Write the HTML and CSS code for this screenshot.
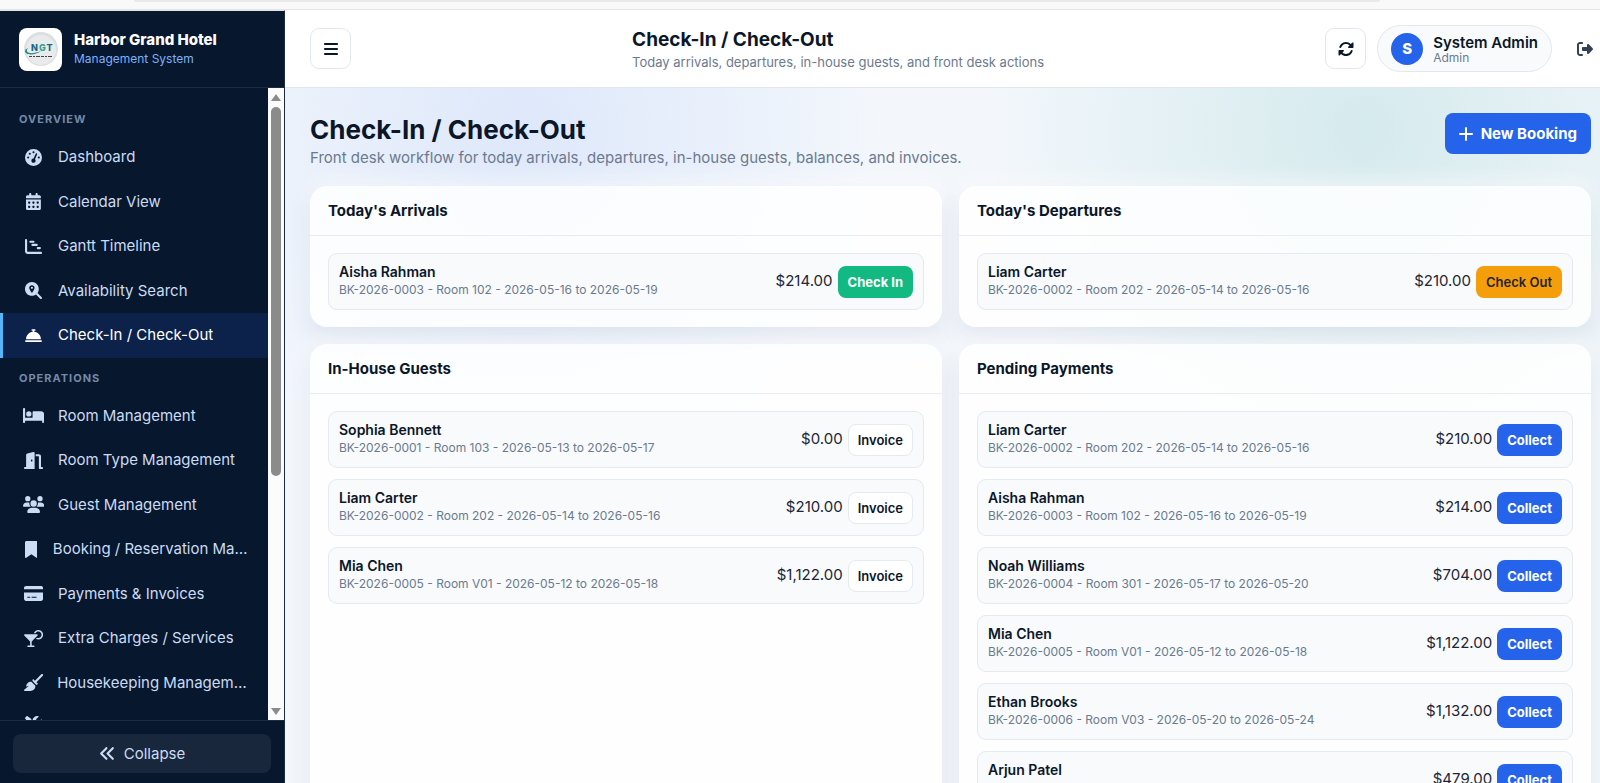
FILE: index.html
```html
<!DOCTYPE html>
<html lang="en">
<head>
    <meta charset="UTF-8">
    <meta name="viewport" content="width=device-width, initial-scale=1.0">
    <title>Check-In / Check-Out - Harbor Grand Hotel</title>
    <link rel="stylesheet" href="styles.css">
</head>
<body>
    <div class="window-strip"><div class="address-bar"></div></div>

    <div class="app">
        <aside class="sidebar">
            <div class="brand">
                <svg class="brand-logo" viewBox="0 0 43 43" aria-hidden="true">
                    <rect width="43" height="43" rx="8" fill="#fff"/>
                    <circle cx="22" cy="21" r="17" fill="#dcdfe1"/>
                    <circle cx="22" cy="22" r="15" fill="#e9eaec"/>
                    <path d="M9 20c-4 5 3 7 13 3-5 4-16 5-16 0 0-1 1-2 3-3z" fill="#1f8a86"/>
                    <text x="12" y="23" class="logo-text"><tspan fill="#17677f">N</tspan><tspan dx="1" fill="#35a08c">G</tspan><tspan dx="1" fill="#17677f">T</tspan></text>
                    <path d="M10 28.500h24" stroke="#454545" stroke-dasharray="3 1 2 1 4 1"/>
                </svg>
                <div class="brand-text">
                    <strong>Harbor Grand Hotel</strong>
                    <span>Management System</span>
                </div>
            </div>

            <div class="nav-area">
                <nav class="nav">
                    <div class="nav-title">Overview</div>
                    <a href="#" class="nav-link">
                        <span class="nav-icon"><svg viewBox="0 0 512 512"><path d="M0 256a256 256 0 1 1 512 0A256 256 0 1 1 0 256zM288 96a32 32 0 1 0 -64 0 32 32 0 1 0 64 0zM256 416c35.3 0 64-28.7 64-64c0-17.4-6.9-33.1-18.1-44.6L366 161.7c5.3-12.1-.2-26.3-12.3-31.6s-26.3 .2-31.6 12.3L257.9 288c-.6 0-1.3 0-1.9 0c-35.3 0-64 28.7-64 64s28.7 64 64 64zM176 144a32 32 0 1 0 -64 0 32 32 0 1 0 64 0zM96 288a32 32 0 1 0 0-64 32 32 0 1 0 0 64zm352-32a32 32 0 1 0 -64 0 32 32 0 1 0 64 0z"/></svg></span>
                        <span class="nav-text">Dashboard</span>
                    </a>
                    <a href="#" class="nav-link">
                        <span class="nav-icon"><svg viewBox="0 0 448 512"><path d="M128 0c17.7 0 32 14.3 32 32V64H288V32c0-17.7 14.3-32 32-32s32 14.3 32 32V64h48c26.5 0 48 21.5 48 48v48H0V112C0 85.5 21.5 64 48 64H96V32c0-17.7 14.3-32 32-32zM0 192H448V464c0 26.5-21.5 48-48 48H48c-26.5 0-48-21.5-48-48V192zm64 80v32c0 8.8 7.2 16 16 16h32c8.8 0 16-7.2 16-16V272c0-8.8-7.2-16-16-16H80c-8.8 0-16 7.2-16 16zm128 0v32c0 8.8 7.2 16 16 16h32c8.8 0 16-7.2 16-16V272c0-8.8-7.2-16-16-16H208c-8.8 0-16 7.2-16 16zm144-16c-8.8 0-16 7.2-16 16v32c0 8.8 7.2 16 16 16h32c8.8 0 16-7.2 16-16V272c0-8.8-7.2-16-16-16H336zM64 400v32c0 8.8 7.2 16 16 16h32c8.8 0 16-7.2 16-16V400c0-8.8-7.2-16-16-16H80c-8.8 0-16 7.2-16 16zm144-16c-8.8 0-16 7.2-16 16v32c0 8.8 7.2 16 16 16h32c8.8 0 16-7.2 16-16V400c0-8.8-7.2-16-16-16H208zm112 16v32c0 8.8 7.2 16 16 16h32c8.8 0 16-7.2 16-16V400c0-8.8-7.2-16-16-16H336c-8.8 0-16 7.2-16 16z"/></svg></span>
                        <span class="nav-text">Calendar View</span>
                    </a>
                    <a href="#" class="nav-link">
                        <span class="nav-icon"><svg viewBox="0 0 512 512"><path d="M32 32c17.7 0 32 14.3 32 32V400c0 8.800 7.200 16 16 16H480c17.700 0 32 14.300 32 32s-14.300 32-32 32H80c-44.200 0-80-35.800-80-80V64C0 46.300 14.300 32 32 32zM160 80h96a32 32 0 0 1 0 64h-96a32 32 0 0 1 0-64zM224 176h128a32 32 0 0 1 0 64H224a32 32 0 0 1 0-64zM384 272h64a32 32 0 0 1 0 64h-64a32 32 0 0 1 0-64z"/></svg></span>
                        <span class="nav-text">Gantt Timeline</span>
                    </a>
                    <a href="#" class="nav-link">
                        <span class="nav-icon"><svg viewBox="0 0 512 512"><path fill-rule="evenodd" d="M416 208c0 45.9-14.9 88.3-40 122.7L502.6 457.4c12.5 12.5 12.5 32.8 0 45.3s-32.8 12.5-45.3 0L330.7 376c-34.4 25.2-76.8 40-122.7 40C93.1 416 0 322.9 0 208S93.1 0 208 0S416 93.1 416 208zM288 176c0-44.2-35.8-80-80-80s-80 35.8-80 80c0 48.8 46.5 111.6 68.6 138.6c6 7.3 16.8 7.3 22.7 0c22.1-27 68.6-89.8 68.6-138.6zm-112 0a32 32 0 1 1 64 0 32 32 0 1 1 -64 0z"/></svg></span>
                        <span class="nav-text">Availability Search</span>
                    </a>
                    <a href="#" class="nav-link active">
                        <span class="nav-icon"><svg viewBox="0 0 512 512"><path d="M216 64c-13.3 0-24 10.7-24 24s10.7 24 24 24h16v33.3C119.6 157.2 32 252.4 32 368H480c0-115.6-87.6-210.8-200-222.7V112h16c13.3 0 24-10.7 24-24s-10.7-24-24-24H256 216zM24 400c-13.3 0-24 10.7-24 24s10.7 24 24 24H488c13.3 0 24-10.7 24-24s-10.7-24-24-24H24z"/></svg></span>
                        <span class="nav-text">Check-In / Check-Out</span>
                    </a>

                    <div class="nav-title">Operations</div>
                    <a href="#" class="nav-link">
                        <span class="nav-icon"><svg viewBox="0 0 640 512"><path d="M32 32c17.7 0 32 14.3 32 32V320H288V160c0-17.7 14.3-32 32-32H544c53 0 96 43 96 96V448c0 17.7-14.3 32-32 32s-32-14.3-32-32V416H352 320 64v32c0 17.7-14.3 32-32 32s-32-14.3-32-32V64C0 46.3 14.3 32 32 32zm144 96a80 80 0 1 1 0 160 80 80 0 1 1 0-160z"/></svg></span>
                        <span class="nav-text">Room Management</span>
                    </a>
                    <a href="#" class="nav-link">
                        <span class="nav-icon"><svg viewBox="0 0 576 512"><path d="M320 32c0-9.9-4.5-19.2-12.3-25.2S289.8-1.4 280.2 1l-179.9 45C79 51.3 64 70.5 64 92.5V448H32c-17.7 0-32 14.3-32 32s14.3 32 32 32H96 288h32V480 32zM256 256c0 17.7-10.7 32-24 32s-24-14.3-24-32s10.7-32 24-32s24 14.3 24 32zm96-128h96V480c0 17.7 14.3 32 32 32h64c17.7 0 32-14.3 32-32s-14.3-32-32-32H512V128c0-35.3-28.7-64-64-64H352v64z"/></svg></span>
                        <span class="nav-text">Room Type Management</span>
                    </a>
                    <a href="#" class="nav-link">
                        <span class="nav-icon"><svg viewBox="0 0 640 512"><path d="M144 0a80 80 0 1 1 0 160A80 80 0 1 1 144 0zM512 0a80 80 0 1 1 0 160A80 80 0 1 1 512 0zM0 298.7C0 239.8 47.8 192 106.7 192h42.7c15.9 0 31 3.5 44.6 9.7c-1.3 7.2-1.9 14.7-1.9 22.3c0 38.2 16.8 72.5 43.3 96c-.2 0-.4 0-.7 0H21.3C9.6 320 0 310.4 0 298.7zM405.3 320c-.2 0-.4 0-.7 0c26.6-23.5 43.3-57.8 43.3-96c0-7.6-.7-15-1.9-22.3c13.6-6.3 28.7-9.7 44.6-9.7h42.7C592.2 192 640 239.8 640 298.7c0 11.8-9.6 21.3-21.3 21.3H405.3zM224 224a96 96 0 1 1 192 0 96 96 0 1 1 -192 0zM128 485.3C128 411.7 187.7 352 261.3 352H378.7C452.3 352 512 411.7 512 485.3c0 14.7-11.9 26.7-26.7 26.7H154.7c-14.7 0-26.7-11.9-26.7-26.7z"/></svg></span>
                        <span class="nav-text">Guest Management</span>
                    </a>
                    <a href="#" class="nav-link">
                        <span class="nav-icon"><svg viewBox="0 0 384 512"><path d="M0 48V487.7C0 501.1 10.9 512 24.3 512c5 0 9.9-1.5 14-4.4L192 400 345.7 507.6c4.1 2.9 9 4.4 14 4.4c13.4 0 24.3-10.9 24.3-24.3V48c0-26.5-21.5-48-48-48H48C21.5 0 0 21.5 0 48z"/></svg></span>
                        <span class="nav-text">Booking / Reservation Management</span>
                    </a>
                    <a href="#" class="nav-link">
                        <span class="nav-icon"><svg viewBox="0 0 576 512"><path d="M64 32C28.7 32 0 60.7 0 96v32H576V96c0-35.3-28.7-64-64-64H64zM576 224H0V416c0 35.3 28.7 64 64 64H512c35.3 0 64-28.7 64-64V224zM112 352h64c8.8 0 16 7.2 16 16s-7.2 16-16 16H112c-8.8 0-16-7.2-16-16s7.2-16 16-16zm112 16c0-8.8 7.2-16 16-16H368c8.8 0 16 7.2 16 16s-7.2 16-16 16H240c-8.8 0-16-7.2-16-16z"/></svg></span>
                        <span class="nav-text">Payments &amp; Invoices</span>
                    </a>
                    <a href="#" class="nav-link">
                        <span class="nav-icon"><svg viewBox="0 0 576 512"><path d="M432 240c53 0 96-43 96-96s-43-96-96-96c-35.5 0-66.6 19.3-83.2 48H296.2C316 40.1 369.3 0 432 0c79.5 0 144 64.5 144 144s-64.5 144-144 144c-27.7 0-53.5-7.8-75.5-21.4l35.4-35.4c12.2 5.6 25.8 8.8 40.1 8.8zM1.8 142.8C5.5 133.8 14.3 128 24 128H392c9.7 0 18.5 5.8 22.2 14.8s1.7 19.3-5.2 26.2l-177 177V464h64c13.3 0 24 10.7 24 24s-10.7 24-24 24H208 120c-13.3 0-24-10.7-24-24s10.7-24 24-24h64V345.9L7 169c-6.9-6.9-8.9-17.2-5.2-26.2z"/></svg></span>
                        <span class="nav-text">Extra Charges / Services</span>
                    </a>
                    <a href="#" class="nav-link">
                        <span class="nav-icon"><svg viewBox="0 0 576 512"><path d="M566.6 54.6c12.5-12.5 12.5-32.8 0-45.3s-32.8-12.5-45.3 0l-192 192-34.7-34.7c-4.2-4.2-10-6.6-16-6.6c-12.5 0-22.6 10.1-22.6 22.6v29.1L364.3 320h29.1c12.5 0 22.6-10.1 22.6-22.6c0-6-2.4-11.8-6.6-16l-34.7-34.7 192-192zM341.1 353.4L222.6 234.9c-42.7-3.7-85.2 11.7-115.8 42.3l-8 8C76.5 307.5 64 337.7 64 369.2c0 6.8 7.1 11.2 13.2 8.2l51.1-25.5c5-2.5 9.5 4.1 5.4 7.9L7.3 473.4C2.7 477.6 0 483.6 0 489.9C0 502.1 9.9 512 22.1 512l173.3 0c38.8 0 75.9-15.4 103.4-42.8c30.6-30.6 45.9-73.1 42.3-115.8z"/></svg></span>
                        <span class="nav-text">Housekeeping Management</span>
                    </a>
                    <a href="#" class="nav-link" aria-label="Maintenance">
                        <span class="nav-icon"><svg viewBox="0 0 512 512"><path d="M78.6 5C69.1-2.4 55.6-1.5 47 7L7 47c-8.5 8.5-9.4 22-2.1 31.6l80 104c4.500 5.900 11.600 9.400 19 9.400h54.100l109 109c-14.700 29-10 65.400 14.300 89.600l112 112c12.500 12.500 32.800 12.500 45.300 0l64-64c12.500-12.500 12.500-32.800 0-45.300l-112-112c-24.200-24.200-60.600-29-89.600-14.300l-109-109V104c0-7.500-3.500-14.500-9.400-19L78.600 5zM512 144c0-10.500-1.100-20.700-3.200-30.500c-2.400-11.200-16.100-14.100-24.200-6l-63.900 63.900c-3 3-7.100 4.700-11.300 4.700H352c-8.800 0-16-7.200-16-16V102.600c0-4.200 1.700-8.300 4.700-11.300l63.900-63.900c8.100-8.100 5.200-21.800-6-24.200C388.700 1.100 378.500 0 368 0C288.500 0 224 64.500 224 144l0 .8 85.300 85.300c36-9.100 75.800 .5 104 28.700L429 274.500c49-23 83-72.800 83-130.500z"/></svg></span>
                    </a>
                </nav>
                <div class="scrollbar" aria-hidden="true">
                    <svg viewBox="0 0 12 9"><path d="M6 1l5 7H1z"/></svg>
                    <div class="scroll-track"><div class="scroll-thumb"></div></div>
                    <svg viewBox="0 0 12 9"><path d="M6 8l5-7H1z"/></svg>
                </div>
            </div>

            <div class="sidebar-footer">
                <button type="button" class="collapse-btn">
                    <svg viewBox="0 0 512 512"><path d="M41.4 233.4c-12.5 12.5-12.5 32.8 0 45.3l160 160c12.5 12.5 32.8 12.5 45.3 0s12.5-32.8 0-45.3L109.3 256 246.6 118.6c12.5-12.5 12.5-32.8 0-45.3s-32.8-12.5-45.3 0l-160 160zm352-160l-160 160c-12.5 12.5-12.5 32.8 0 45.3l160 160c12.5 12.5 32.8 12.5 45.3 0s12.5-32.8 0-45.3L301.3 256 438.6 118.6c12.5-12.5 12.5-32.8 0-45.3s-32.8-12.5-45.3 0z"/></svg>
                    Collapse
                </button>
            </div>
        </aside>

        <div class="main">
            <header class="topbar">
                <button type="button" class="icon-btn" aria-label="Toggle menu">
                    <svg viewBox="0 0 448 512"><path d="M0 96C0 78.3 14.3 64 32 64H416c17.7 0 32 14.3 32 32s-14.3 32-32 32H32C14.3 128 0 113.700 0 96zM0 256c0-17.700 14.300-32 32-32H416c17.700 0 32 14.300 32 32s-14.300 32-32 32H32c-17.700 0-32-14.300-32-32zM448 416c0 17.700-14.300 32-32 32H32c-17.700 0-32-14.300-32-32s14.300-32 32-32H416c17.700 0 32 14.300 32 32z"/></svg>
                </button>
                <div class="topbar-title">
                    <h2>Check-In / Check-Out</h2>
                    <p>Today arrivals, departures, in-house guests, and front desk actions</p>
                </div>
                <div class="topbar-actions">
                    <button type="button" class="icon-btn" aria-label="Refresh">
                        <svg viewBox="0 0 512 512"><path d="M142.9 142.9c62.2-62.2 162.7-62.5 225.3-1L327 183c-6.9 6.9-8.9 17.2-5.2 26.2s12.5 14.8 22.2 14.8H463.5c0 0 0 0 0 0H472c13.3 0 24-10.7 24-24V72c0-9.7-5.8-18.5-14.8-22.2s-19.3-1.7-26.2 5.2L413.4 96.6c-87.6-86.5-228.7-86.2-315.8 1C73.2 122 55.6 150.7 44.8 181.4c-5.9 16.7 2.9 34.9 19.5 40.8s34.9-2.9 40.8-19.5c7.7-21.8 20.2-42.3 37.8-59.8zM16 312v7.6 .7V440c0 9.7 5.8 18.5 14.8 22.2s19.3 1.7 26.2-5.2l41.6-41.6c87.6 86.5 228.7 86.2 315.8-1c24.4-24.4 42.1-53.1 52.9-83.7c5.9-16.7-2.9-34.9-19.5-40.8s-34.9 2.9-40.8 19.5c-7.7 21.8-20.2 42.3-37.8 59.8c-62.2 62.2-162.7 62.5-225.3 1L185 329c6.9-6.9 8.9-17.2 5.2-26.2s-12.5-14.8-22.2-14.8H48.4h-.7H40c-13.3 0-24 10.7-24 24z"/></svg>
                    </button>
                    <div class="user-pill">
                        <div class="avatar">S</div>
                        <div class="user-text">
                            <strong>System Admin</strong>
                            <span>Admin</span>
                        </div>
                    </div>
                    <button type="button" class="logout-btn" aria-label="Logout">
                        <svg viewBox="0 0 512 512"><path d="M377.9 105.9L500.7 228.7c7.2 7.2 11.3 17.1 11.3 27.3s-4.1 20.1-11.3 27.3L377.9 406.1c-6.4 6.4-15 9.9-24 9.9c-18.7 0-33.9-15.2-33.9-33.9l0-62.1-128 0c-17.7 0-32-14.3-32-32l0-64c0-17.7 14.3-32 32-32l128 0 0-62.1c0-18.7 15.2-33.9 33.9-33.9c9 0 17.6 3.6 24 9.9zM160 96L96 96c-17.7 0-32 14.3-32 32l0 256c0 17.7 14.3 32 32 32l64 0c17.7 0 32 14.3 32 32s-14.3 32-32 32l-64 0c-53 0-96-43-96-96L0 128C0 75 43 32 96 32l64 0c17.7 0 32 14.3 32 32s-14.3 32-32 32z"/></svg>
                    </button>
                </div>
            </header>

            <main class="content">
                <div class="page-head">
                    <div>
                        <h1>Check-In / Check-Out</h1>
                        <p>Front desk workflow for today arrivals, departures, in-house guests, balances, and invoices.</p>
                    </div>
                    <button type="button" class="btn-new">
                        <svg viewBox="0 0 14 14"><path d="M7 1v12M1 7h12" fill="none" stroke="currentColor" stroke-width="2" stroke-linecap="round"/></svg>
                        New Booking
                    </button>
                </div>

                <div class="card-grid">
                    <section class="card">
                        <h3>Today's Arrivals</h3>
                        <div class="card-body">
                            <div class="row">
                                <div class="guest"><strong>Aisha Rahman</strong><span>BK-2026-0003 - Room 102 - 2026-05-16 to 2026-05-19</span></div>
                                <div class="row-actions">$214.00 <button type="button" class="btn btn-success">Check In</button></div>
                            </div>
                        </div>
                    </section>

                    <section class="card">
                        <h3>Today's Departures</h3>
                        <div class="card-body">
                            <div class="row">
                                <div class="guest"><strong>Liam Carter</strong><span>BK-2026-0002 - Room 202 - 2026-05-14 to 2026-05-16</span></div>
                                <div class="row-actions">$210.00 <button type="button" class="btn btn-warning">Check Out</button></div>
                            </div>
                        </div>
                    </section>

                    <section class="card">
                        <h3>In-House Guests</h3>
                        <div class="card-body">
                            <div class="row">
                                <div class="guest"><strong>Sophia Bennett</strong><span>BK-2026-0001 - Room 103 - 2026-05-13 to 2026-05-17</span></div>
                                <div class="row-actions">$0.00 <button type="button" class="btn btn-light">Invoice</button></div>
                            </div>
                            <div class="row">
                                <div class="guest"><strong>Liam Carter</strong><span>BK-2026-0002 - Room 202 - 2026-05-14 to 2026-05-16</span></div>
                                <div class="row-actions">$210.00 <button type="button" class="btn btn-light">Invoice</button></div>
                            </div>
                            <div class="row">
                                <div class="guest"><strong>Mia Chen</strong><span>BK-2026-0005 - Room V01 - 2026-05-12 to 2026-05-18</span></div>
                                <div class="row-actions">$1,122.00 <button type="button" class="btn btn-light">Invoice</button></div>
                            </div>
                        </div>
                    </section>

                    <section class="card">
                        <h3>Pending Payments</h3>
                        <div class="card-body">
                            <div class="row">
                                <div class="guest"><strong>Liam Carter</strong><span>BK-2026-0002 - Room 202 - 2026-05-14 to 2026-05-16</span></div>
                                <div class="row-actions">$210.00 <button type="button" class="btn btn-primary">Collect</button></div>
                            </div>
                            <div class="row">
                                <div class="guest"><strong>Aisha Rahman</strong><span>BK-2026-0003 - Room 102 - 2026-05-16 to 2026-05-19</span></div>
                                <div class="row-actions">$214.00 <button type="button" class="btn btn-primary">Collect</button></div>
                            </div>
                            <div class="row">
                                <div class="guest"><strong>Noah Williams</strong><span>BK-2026-0004 - Room 301 - 2026-05-17 to 2026-05-20</span></div>
                                <div class="row-actions">$704.00 <button type="button" class="btn btn-primary">Collect</button></div>
                            </div>
                            <div class="row">
                                <div class="guest"><strong>Mia Chen</strong><span>BK-2026-0005 - Room V01 - 2026-05-12 to 2026-05-18</span></div>
                                <div class="row-actions">$1,122.00 <button type="button" class="btn btn-primary">Collect</button></div>
                            </div>
                            <div class="row">
                                <div class="guest"><strong>Ethan Brooks</strong><span>BK-2026-0006 - Room V03 - 2026-05-20 to 2026-05-24</span></div>
                                <div class="row-actions">$1,132.00 <button type="button" class="btn btn-primary">Collect</button></div>
                            </div>
                            <div class="row">
                                <div class="guest"><strong>Arjun Patel</strong></div>
                                <div class="row-actions">$479.00 <button type="button" class="btn btn-primary">Collect</button></div>
                            </div>
                        </div>
                    </section>
                </div>
            </main>
        </div>
    </div>
</body>
</html>
```

FILE: styles.css
```css
* {
    box-sizing: border-box;
}

body {
    margin: 0;
    height: 100vh;
    display: flex;
    flex-direction: column;
    overflow: hidden;
    font-family: Inter, "Liberation Sans", sans-serif;
    font-size: 16px;
    line-height: 1.5;
    color: #0b1729;
    background: #fff;
}

h1, h2, h3, p {
    margin: 0;
}

button {
    font-family: inherit;
    cursor: pointer;
}

svg {
    fill: currentColor;
    flex-shrink: 0;
}

/* Window edge */
.window-strip {
    flex: none;
    height: 10px;
    padding: 0 220px 0 134px;
    background: #f9f9f9;
    border-bottom: 1px solid #e3e5e7;
}

.address-bar {
    height: 2px;
    background: #e9e9e9;
    border-radius: 0 0 8px 8px;
}

.app {
    flex: 1;
    min-height: 0;
    display: flex;
}

/* Sidebar */
.sidebar {
    flex: none;
    width: 285px;
    display: flex;
    flex-direction: column;
    background: #07172d;
    border-top: 1px solid #e3e5e7;
    border-right: 1px solid #1c2b40;
    color: #cbdcf5;
}

.brand {
    flex: none;
    height: 77px;
    display: flex;
    align-items: center;
    gap: 12px;
    padding: 0 19px;
    border-bottom: 1px solid #1a2a40;
}

.brand-logo {
    width: 43px;
    height: 43px;
}

.logo-text {
    font-family: Inter, sans-serif;
    font-size: 9px;
    font-weight: 800;
}

.brand-text {
    display: flex;
    flex-direction: column;
}

.brand-text strong {
    font-size: 15px;
    font-weight: 800;
    line-height: 20px;
    color: #fff;
}

.brand-text span {
    font-size: 12px;
    line-height: 18px;
    color: #7fb0fb;
}

.nav-area {
    flex: 1;
    min-height: 0;
    display: flex;
}

.nav {
    flex: 1;
    min-width: 0;
    overflow: hidden;
    padding-top: 13px;
}

.nav-title {
    padding: 10px 19px 8px;
    font-size: 11px;
    font-weight: 700;
    line-height: 16px;
    letter-spacing: 1px;
    text-transform: uppercase;
    color: #7489a8;
}

.nav-title ~ .nav-title {
    padding-top: 12px;
}

.nav-link {
    display: flex;
    align-items: center;
    gap: 13px;
    padding: 11px 19px;
    border-left: 3px solid transparent;
    font-size: 15px;
    color: #cbdcf5;
    text-decoration: none;
}

.nav-link.active {
    background: #0c224b;
    border-left-color: #54b6f8;
    color: #fff;
}

.nav-icon {
    width: 23px;
    display: flex;
    justify-content: center;
}

.nav-icon svg {
    height: 17px;
}

.nav-text {
    overflow: hidden;
    white-space: nowrap;
    text-overflow: ellipsis;
}

.scrollbar {
    flex: none;
    width: 16px;
    display: flex;
    flex-direction: column;
    align-items: center;
    gap: 5px;
    padding: 5px 0 4px;
    background: #fcfcfc;
    color: #8b8b8b;
}

.scrollbar svg {
    width: 12px;
    height: 9px;
}

.scroll-track {
    flex: 1;
    width: 10px;
}

.scroll-thumb {
    height: 62%;
    border-radius: 5px;
    background: #8b8b8b;
}

.sidebar-footer {
    flex: none;
    padding: 13px 13px 10px;
    border-top: 1px solid #1a2a40;
}

.collapse-btn {
    width: 100%;
    height: 39px;
    display: flex;
    align-items: center;
    justify-content: center;
    gap: 8px;
    border: 0;
    border-radius: 8px;
    background: #18273c;
    color: #cbdcf5;
    font-size: 15px;
}

.collapse-btn svg {
    height: 17px;
}

/* Topbar */
.main {
    flex: 1;
    min-width: 0;
    display: flex;
    flex-direction: column;
}

.topbar {
    flex: none;
    height: 78px;
    display: flex;
    align-items: center;
    justify-content: space-between;
    padding: 0 7px 0 25px;
    background: #fff;
    border-bottom: 1px solid #dfe7ef;
}

.icon-btn {
    width: 41px;
    height: 41px;
    display: flex;
    align-items: center;
    justify-content: center;
    padding: 0;
    border: 1px solid #e2e8f0;
    border-radius: 9px;
    background: #fff;
    color: #0b1729;
}

.icon-btn svg {
    height: 16px;
}

.topbar-title {
    padding-top: 2px;
}

.topbar-title h2 {
    font-size: 19px;
    font-weight: 700;
    line-height: 24px;
}

.topbar-title p {
    font-size: 13px;
    line-height: 20px;
    color: #6b7a90;
}

.topbar-actions {
    display: flex;
    align-items: center;
    gap: 11px;
}

.user-pill {
    display: flex;
    align-items: center;
    gap: 10px;
    height: 47px;
    padding: 0 13px;
    border: 1px solid #e2e8f0;
    border-radius: 24px;
    background: #f8fafc;
}

.avatar {
    width: 32px;
    height: 32px;
    border-radius: 50%;
    background: #2563eb;
    color: #fff;
    font-size: 15px;
    font-weight: 800;
    line-height: 32px;
    text-align: center;
}

.user-text {
    display: flex;
    flex-direction: column;
    padding-top: 2px;
}

.user-text strong {
    font-size: 15px;
    font-weight: 600;
    line-height: 16px;
}

.user-text span {
    font-size: 12px;
    line-height: 14px;
    color: #6b7a90;
}

.logout-btn {
    padding: 0 0 0 14px;
    border: 0;
    background: none;
    color: #334155;
    display: flex;
}

.logout-btn svg {
    height: 16px;
}

/* Page */
.content {
    flex: 1;
    min-height: 0;
    overflow: hidden;
    padding: 25px 9px 0 25px;
    background:
        radial-gradient(circle at 18% 6%, rgba(37, 99, 235, 0.1), transparent 360px),
        radial-gradient(circle at 82% 6%, rgba(13, 148, 136, 0.13), transparent 380px),
        #f3f7fc;
}

.page-head {
    display: flex;
    align-items: flex-start;
    justify-content: space-between;
    margin-bottom: 17px;
}

.page-head h1 {
    font-size: 26px;
    font-weight: 700;
    line-height: 33px;
}

.page-head p {
    font-size: 15px;
    line-height: 23px;
    color: #6b7a90;
}

.btn-new {
    display: flex;
    align-items: center;
    gap: 8px;
    height: 41px;
    padding: 0 14px;
    border: 0;
    border-radius: 8px;
    background: #2563eb;
    color: #fff;
    font-size: 15px;
    font-weight: 700;
}

.btn-new svg {
    height: 14px;
}

.card-grid {
    display: grid;
    grid-template-columns: 1fr 1fr;
    gap: 17px;
}

.card {
    border-radius: 17px;
    background: rgba(255, 255, 255, 0.85);
    box-shadow:
        0 10px 24px rgba(30, 58, 95, 0.09),
        0 -6px 18px rgba(255, 255, 255, 0.6);
}

.card h3 {
    padding: 13px 18px 12px;
    border-bottom: 1px solid #e9edf3;
    font-size: 15px;
    font-weight: 700;
    line-height: 24px;
}

.card-body {
    display: flex;
    flex-direction: column;
    gap: 11px;
    padding: 17px 18px;
}

.row {
    display: flex;
    align-items: center;
    justify-content: space-between;
    height: 57px;
    padding: 0 10px;
    border: 1px solid #e5eaf1;
    border-radius: 9px;
    background: #f8fafc;
}

.guest {
    display: flex;
    flex-direction: column;
    align-self: flex-start;
    padding-top: 9px;
}

.guest strong {
    font-size: 14px;
    font-weight: 600;
    line-height: 18px;
}

.guest span {
    font-size: 12px;
    line-height: 18px;
    color: #6b7a90;
}

.row-actions {
    display: flex;
    align-items: center;
    gap: 5px;
    font-size: 15px;
    color: #1c2636;
}

.btn {
    height: 32px;
    padding: 0 9px;
    border: 1px solid transparent;
    border-radius: 8px;
    font-size: 13px;
    font-weight: 700;
}

.btn-success {
    background: #12b981;
    color: #fff;
}

.btn-warning {
    background: #f59e0b;
    color: #1f2430;
    font-weight: 600;
}

.btn-light {
    background: #fff;
    border-color: #e5eaf1;
    color: #0b1729;
    font-weight: 600;
}

.btn-primary {
    background: #2563eb;
    color: #fff;
}
```
